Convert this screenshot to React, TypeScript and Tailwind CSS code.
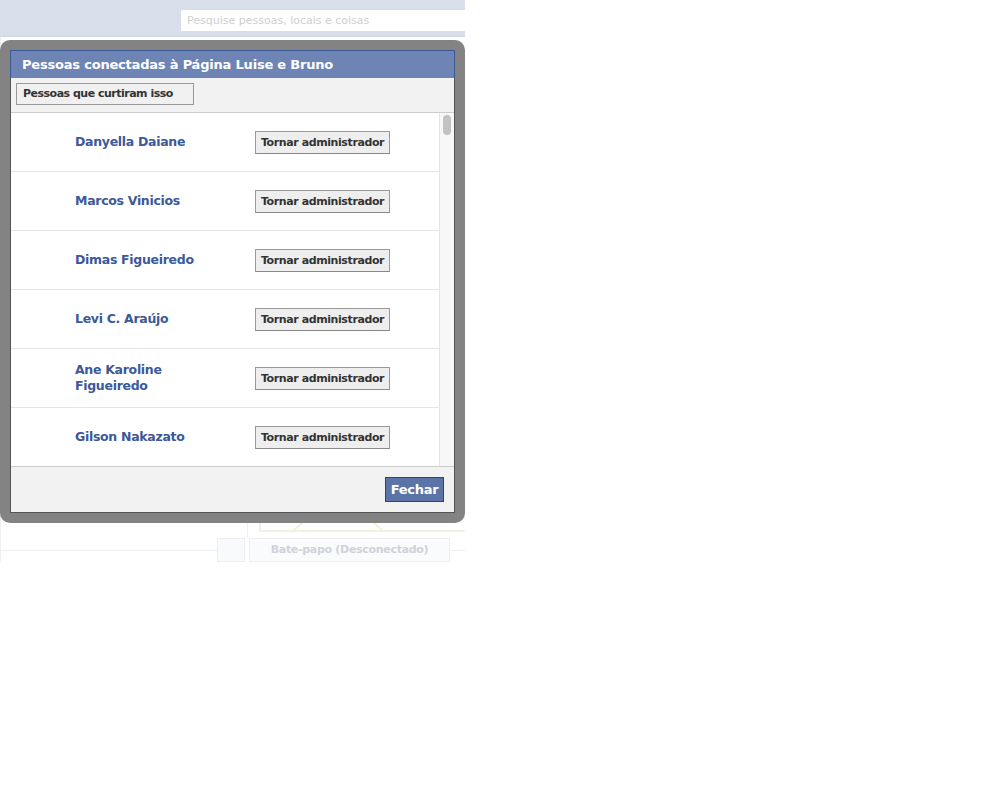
const PEOPLE = [
  'Danyella Daiane',
  'Marcos Vinicios',
  'Dimas Figueiredo',
  'Levi C. Araújo',
  'Ane Karoline Figueiredo',
  'Gilson Nakazato',
];

const FONT = "font-['DejaVu_Sans','Lucida_Grande',sans-serif]";

function PersonRow({ name }: { name: string }) {
  return (
    <div className="flex items-center h-[59px] border-b border-[#e5e5e5]">
      <div className="w-[244px] pl-[64px] pr-[10px]">
        <div className="max-w-[140px] text-[12.5px] leading-[16px] font-bold text-[#3b5998] tracking-[-0.3px]">
          {name}
        </div>
      </div>
      <button className="h-[23px] w-[135px] bg-[#eeeeee] border border-[#999] border-b-[#888] text-[11px] font-bold text-[#333] leading-none tracking-[-0.4px]">
        Tornar administrador
      </button>
    </div>
  );
}

export default function App() {
  return (
    <div className={`${FONT} bg-white w-[1000px] h-[800px]`}>
      <div className="relative w-[465px] h-[562px] overflow-hidden">
        {/* page behind */}
        <div className="h-[37px] bg-[#d8dfea] border-b border-[#cdd5e3] flex items-start pt-[10px] pl-[181px]">
          <div className="h-[21px] flex-1 bg-white pl-[6px] text-[11px] leading-[21px] text-[#cfcfcf] whitespace-nowrap">
            Pesquise pessoas, locais e coisas
          </div>
        </div>
        <div className="h-[463px] border-l border-[#eef0f5]" />
        <div className="h-[38px] flex border-l border-[#eef0f5]">
          <div className="w-[247px] border-r border-[#eef0f5]" />
          <div className="ml-[11px] flex-1 h-[32px] border-2 border-r-0 border-[#eef2de] relative">
            <svg className="absolute left-[32px] top-[14px]" width="90" height="16" viewBox="0 0 90 16">
              <path d="M0 15 L16 1 L74 1 L90 15" fill="none" stroke="#eef2de" strokeWidth="2" />
            </svg>
          </div>
        </div>
        <div className="flex h-[24px] border-l border-[#eef0f5]">
          <div className="w-[216px] flex flex-col">
            <div className="h-[12px]" />
            <div className="border-t border-[#eceef3]" />
          </div>
          <div className="w-[28px] bg-[#f9fafc] border border-[#eceef3]" />
          <div className="w-[201px] ml-[4px] bg-[#fafbfd] border border-[#eceef3] text-center text-[11px] font-bold text-[#cfd2d8] leading-[22px] tracking-[-0.3px]">
            Bate-papo (Desconectado)
          </div>
          <div className="flex-1 flex flex-col">
            <div className="h-[12px]" />
            <div className="border-t border-[#eceef3]" />
          </div>
        </div>

        {/* dialog */}
        <div className="absolute left-0 top-[40px] w-[465px] h-[483px] rounded-[10px] bg-[#838383] p-[10px]">
          <div className="h-full flex flex-col border border-[#555] bg-white">
            <div className="h-[28px] -mx-px -mt-px bg-[#6d84b4] border border-[#3b5998] border-b-0 pl-[11px] text-[13px] font-bold text-white leading-[28px] tracking-[-0.2px]">
              Pessoas conectadas à Página Luise e Bruno
            </div>
            <div className="h-[35px] bg-[#f2f2f2] border-b border-[#ccc] pt-[5px] pl-[5px]">
              <div className="w-[178px] h-[22px] bg-[#f0f0f0] border border-[#999] pl-[6px] text-[11px] font-bold text-[#333] leading-[20px] tracking-[-0.5px]">
                Pessoas que curtiram isso
              </div>
            </div>
            <div className="flex h-[353px]">
              <div className="flex-1 overflow-hidden">
                {PEOPLE.map((p) => (
                  <PersonRow key={p} name={p} />
                ))}
              </div>
              <div className="w-[15px] bg-[#f7f7f7] border-l border-[#e6e6e6] pt-[2px] flex justify-center">
                <div className="w-[8px] h-[20px] rounded-full bg-[#c2c2c2]" />
              </div>
            </div>
            <div className="flex-1 bg-[#f2f2f2] border-t border-[#ccc] flex justify-end items-start pt-[10px] pr-[10px]">
              <button className="h-[25px] w-[59px] bg-[#5b74a8] border border-[#29447e] text-[13px] font-bold text-white leading-none tracking-[-0.3px]">
                Fechar
              </button>
            </div>
          </div>
        </div>
      </div>
    </div>
  );
}
